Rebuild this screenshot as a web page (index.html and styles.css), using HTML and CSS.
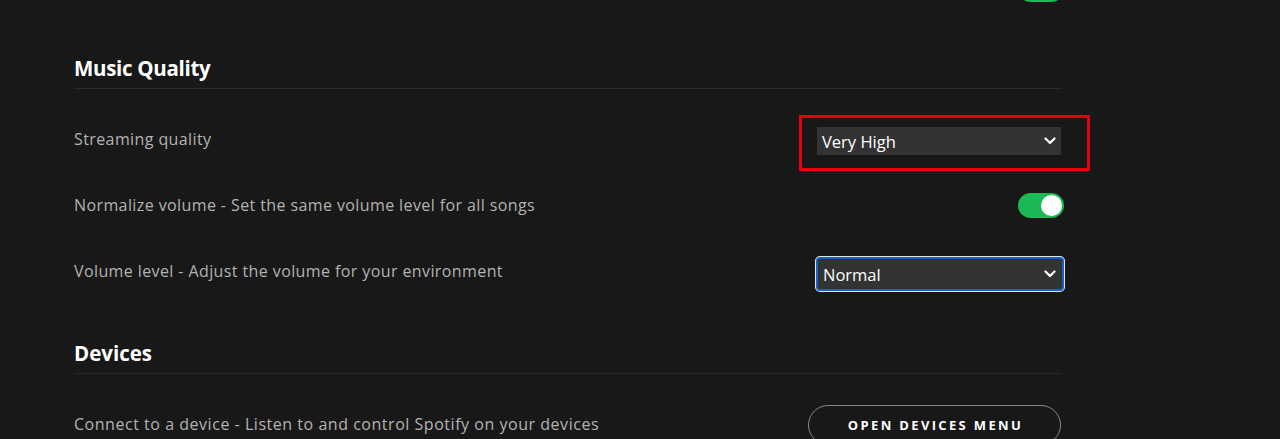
FILE: index.html
```html
<!DOCTYPE html>
<html lang="en">
<head>
<meta charset="utf-8">
<title>Settings</title>
<link rel="stylesheet" href="styles.css">
</head>
<body>
<main class="page">
  <div class="row stub">
    <span class="label"></span>
    <span class="toggle on"><span class="knob"></span></span>
  </div>

  <section class="section first">
    <h2 class="heading">Music Quality</h2>
    <div class="rows">
      <div class="row">
        <span class="label">Streaming quality</span>
        <div class="control">
          <div class="highlight-wrap">
            <div class="select plain">
              <span>Very High</span>
              <svg class="chev" viewBox="0 0 12 8" width="12" height="8"><path d="M1.5 1.5 L6 6 L10.5 1.5" fill="none" stroke="#fff" stroke-width="2.2" stroke-linecap="round" stroke-linejoin="round"/></svg>
            </div>
            <span class="annot"></span>
          </div>
        </div>
      </div>
      <div class="row">
        <span class="label">Normalize volume - Set the same volume level for all songs</span>
        <div class="control">
          <span class="toggle on shifted"><span class="knob"></span></span>
        </div>
      </div>
      <div class="row">
        <span class="label">Volume level - Adjust the volume for your environment</span>
        <div class="control">
          <div class="select focused">
            <span>Normal</span>
            <svg class="chev" viewBox="0 0 12 8" width="12" height="8"><path d="M1.5 1.5 L6 6 L10.5 1.5" fill="none" stroke="#fff" stroke-width="2.2" stroke-linecap="round" stroke-linejoin="round"/></svg>
          </div>
        </div>
      </div>
    </div>
  </section>

  <section class="section">
    <h2 class="heading devices">Devices</h2>
    <div class="rows">
      <div class="row">
        <span class="label wide">Connect to a device - Listen to and control Spotify on your devices</span>
        <div class="control">
          <button class="pill">OPEN DEVICES MENU</button>
        </div>
      </div>
    </div>
  </section>
</main>
</body>
</html>
```

FILE: styles.css
```css
html, body {
  margin: 0;
  padding: 0;
  background: #181818;
  height: 100%;
  overflow: hidden;
}
body {
  font-family: "Open Sans", "Liberation Sans", sans-serif;
  color: #b3b3b3;
}
.page {
  width: 988px;
  margin-left: 74px;
}
.row {
  height: 66px;
  display: flex;
  align-items: center;
  justify-content: space-between;
}
.row.stub {
  margin-top: -44px;
}
.row.stub .toggle {
  margin-right: -2px;
}
.label {
  font-size: 16px;
  letter-spacing: 0.4px;
  color: #b3b3b3;
}
.label.wide {
  letter-spacing: 0.53px;
}
.control {
  display: flex;
  justify-content: flex-end;
}
.section.first {
  margin-top: 32px;
}
.section {
  margin-top: 35px;
}
.heading {
  margin: 0;
  font-size: 20.5px;
  line-height: 28px;
  font-weight: 700;
  color: #fff;
  padding-bottom: 6px;
  border-bottom: 1px solid #2a2a2a;
  letter-spacing: -0.3px;
}
.heading.devices {
  letter-spacing: 0;
}
.rows {
  padding-top: 17px;
}
.highlight-wrap {
  position: relative;
  margin-top: 4px;
}
.annot {
  position: absolute;
  left: -18px;
  right: -28px;
  top: -12px;
  bottom: -16px;
  border: 3px solid #e3000f;
  pointer-events: none;
}
.select {
  display: flex;
  align-items: center;
  justify-content: space-between;
  background: #333;
  color: #fff;
  font-size: 16.5px;
  box-sizing: border-box;
}
.select.plain {
  width: 244px;
  height: 28px;
  padding: 0 5px 0 5px;
  margin-right: 1px;
}
.select.focused {
  width: 248px;
  height: 34px;
  padding: 0 6px 0 5px;
  border-radius: 4px;
  border: 2px solid #1a5fc8;
  box-shadow: 0 0 0 1px #dfe6ef;
  margin-top: 6px;
  margin-right: -2px;
}
.chev {
  display: block;
}
.toggle {
  display: inline-flex;
  align-items: center;
  justify-content: flex-end;
  width: 46px;
  height: 25px;
  border-radius: 13px;
  background: #1db954;
  box-sizing: border-box;
  padding: 2px;
}
.toggle.shifted {
  margin-right: -2px;
  margin-top: 1px;
}
.knob {
  width: 21px;
  height: 21px;
  border-radius: 50%;
  background: #fff;
}
.pill {
  width: 253px;
  height: 40px;
  border-radius: 20px;
  border: 1px solid #878787;
  background: transparent;
  color: #fff;
  font-family: "Open Sans", "Liberation Sans", sans-serif;
  font-weight: 700;
  font-size: 13px;
  letter-spacing: 2.35px;
  margin-right: 1px;
  margin-top: 2px;
  padding: 0 0 0 2px;
}
```
